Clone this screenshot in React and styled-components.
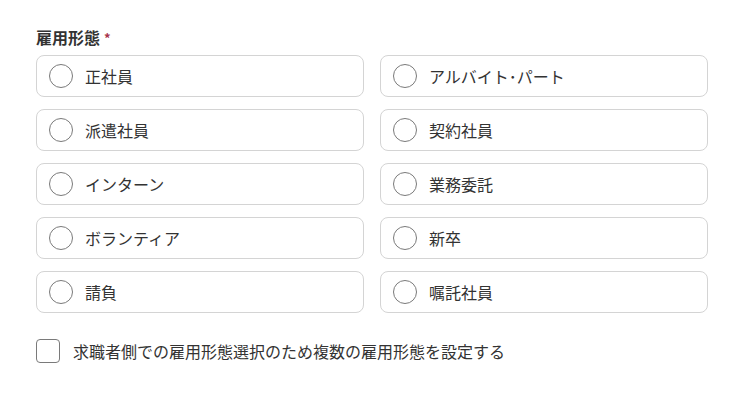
import React, { useState } from "react";
import styled, { createGlobalStyle } from "styled-components";

const GlobalStyle = createGlobalStyle`
  body {
    margin: 0;
    background: #fff;
    font-family: "Noto Sans CJK JP", "Noto Sans", sans-serif;
    color: #333;
  }
`;

const Wrapper = styled.div`
  padding: 26px 0 0 36px;
  width: 672px;
`;

const Label = styled.div`
  font-size: 16px;
  font-weight: 700;
  line-height: 22px;
  color: #333;
  margin-bottom: 6px;
`;

const Required = styled.span`
  color: #a8344a;
  font-size: 13px;
  margin-left: 4px;
  vertical-align: 1px;
`;

const Grid = styled.div`
  display: grid;
  grid-template-columns: 1fr 1fr;
  column-gap: 16px;
  row-gap: 12px;
`;

const Option = styled.label`
  display: flex;
  align-items: center;
  height: 42px;
  box-sizing: border-box;
  border: 1px solid #d4d4d4;
  border-radius: 8px;
  padding-left: 12px;
  cursor: pointer;
  background: #fff;
`;

const Radio = styled.span`
  width: 24px;
  height: 24px;
  box-sizing: border-box;
  border-radius: 50%;
  border: 1.5px solid #7a7a7a;
  margin-right: 12px;
  flex-shrink: 0;
  position: relative;

  &::after {
    content: "";
    position: absolute;
    inset: 5px;
    border-radius: 50%;
    background: ${(p) => (p.$checked ? "#333" : "transparent")};
  }
`;

const OptionText = styled.span`
  font-size: 16px;
  color: #333;
`;

const CheckRow = styled.label`
  display: flex;
  align-items: center;
  margin-top: 26px;
  cursor: pointer;
`;

const Box = styled.span`
  width: 24px;
  height: 24px;
  box-sizing: border-box;
  border: 1.5px solid #7a7a7a;
  border-radius: 4px;
  margin-right: 13px;
  flex-shrink: 0;
`;

const CheckText = styled.span`
  font-size: 16px;
  color: #333;
`;

const options = [
  "正社員",
  "アルバイト･パート",
  "派遣社員",
  "契約社員",
  "インターン",
  "業務委託",
  "ボランティア",
  "新卒",
  "請負",
  "嘱託社員",
];

export default function App() {
  const [selected, setSelected] = useState(null);
  return (
    <Wrapper>
      <GlobalStyle />
      <Label>
        雇用形態<Required>*</Required>
      </Label>
      <Grid>
        {options.map((o) => (
          <Option key={o} onClick={() => setSelected(o)}>
            <Radio $checked={selected === o} />
            <OptionText>{o}</OptionText>
          </Option>
        ))}
      </Grid>
      <CheckRow>
        <Box />
        <CheckText>求職者側での雇用形態選択のため複数の雇用形態を設定する</CheckText>
      </CheckRow>
    </Wrapper>
  );
}
